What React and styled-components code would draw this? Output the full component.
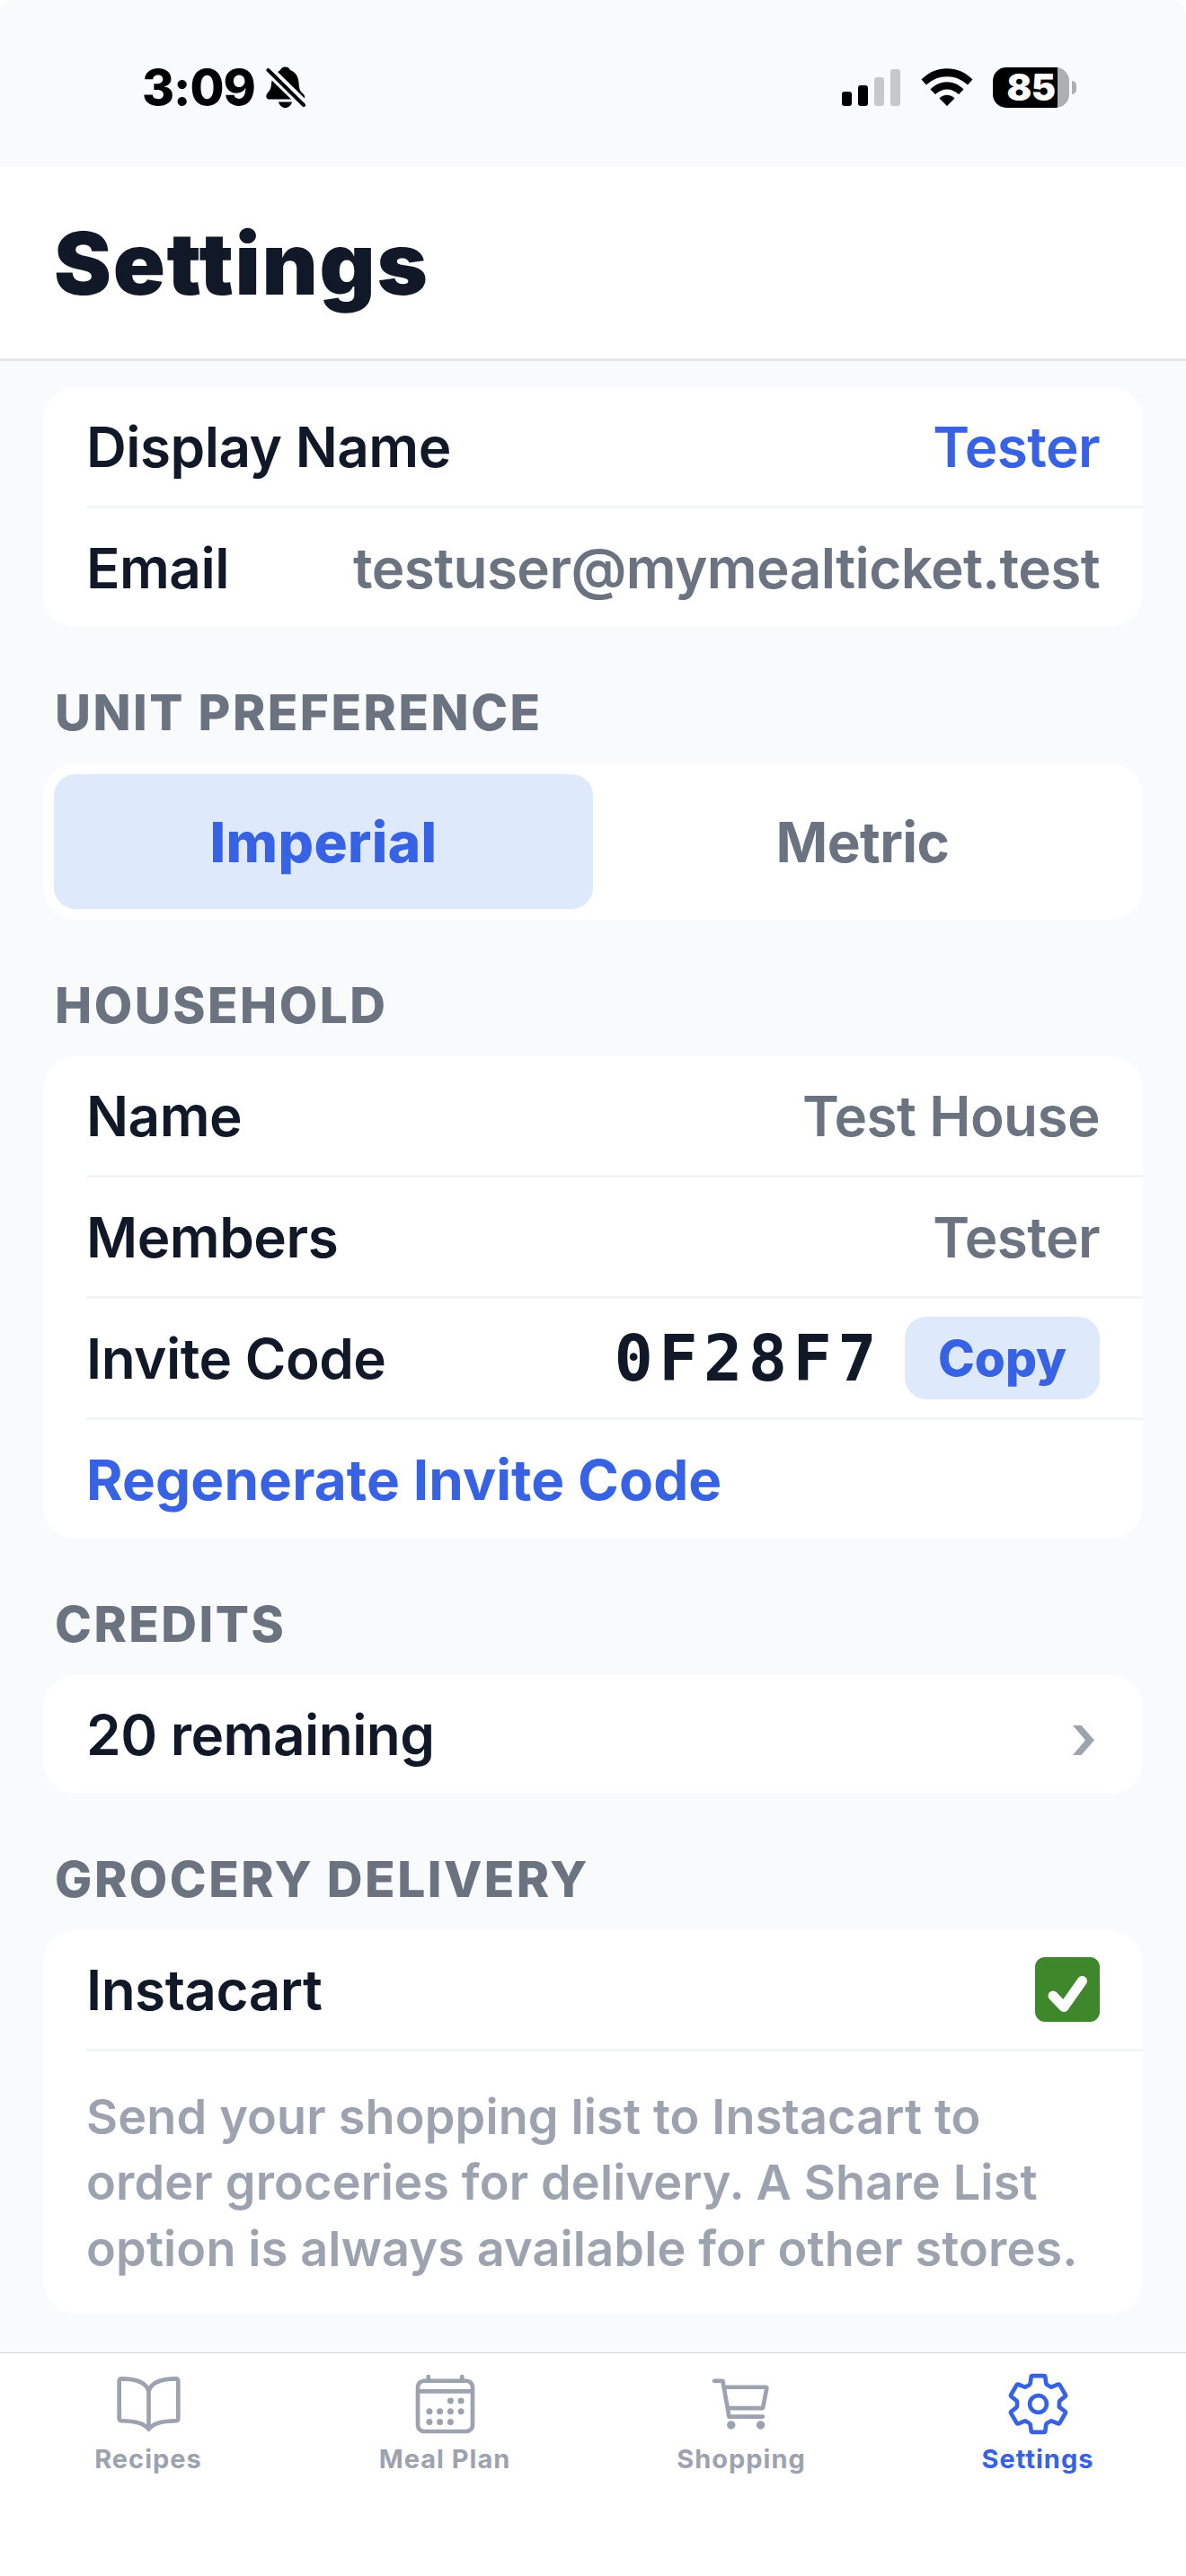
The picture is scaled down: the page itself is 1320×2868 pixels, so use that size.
import React from "react";
import styled, { createGlobalStyle } from "styled-components";
import {
  IoBookOutline,
  IoCalendarOutline,
  IoCartOutline,
  IoSettingsOutline,
} from "react-icons/io5";

const color = {
  page: "#f9fafc",
  card: "#ffffff",
  ink: "#111827",
  muted: "#6b7280",
  faint: "#9ca3af",
  line: "#f3f4f6",
  accent: "#3662e3",
  accentSoft: "#dee9fb",
};

const GlobalStyle = createGlobalStyle`
  * {
    box-sizing: border-box;
  }

  body {
    margin: 0;
    background-color: #ffffff;
    font-family: Inter, "Liberation Sans", sans-serif;
  }
`;

const Screen = styled.div`
  width: 1320px;
  height: 2868px;
  display: flex;
  flex-direction: column;
  overflow: hidden;
`;

const StatusBar = styled.div`
  height: 186px;
  flex-shrink: 0;
  display: flex;
  justify-content: space-between;
  align-items: flex-start;
  padding: 74px 122px 0 158px;
  background-color: ${color.page};
  border-radius: 16px 16px 0 0;
  color: #000000;
`;
const StatusGroup = styled.div`
  display: flex;
  align-items: center;
  height: 46px;
`;
const Clock = styled.span`
  width: 138px;
  font-size: 55px;
  font-weight: 800;
  line-height: 46px;
  letter-spacing: -1px;
`;
const BellOff = styled.svg`
  width: 44px;
  height: 46px;
`;
const Signal = styled.svg`
  width: 66px;
  height: 42px;
  margin-right: 22px;
`;
const Wifi = styled.svg`
  width: 58px;
  height: 42px;
  margin-right: 22px;
`;
const Battery = styled.div`
  width: 85px;
  height: 45px;
  display: flex;
  align-items: center;
  justify-content: center;
  border-radius: 15px;
  background: linear-gradient(to right, #000000 72px, #aeafb0 72px);
  color: #ffffff;
  font-size: 41px;
  font-weight: 900;
  letter-spacing: -0.5px;
`;
const BatteryTip = styled.div`
  width: 5px;
  height: 15px;
  margin-left: 3px;
  border-radius: 0 5px 5px 0;
  background-color: #aeafb0;
`;

const Header = styled.header`
  height: 216px;
  flex-shrink: 0;
  display: flex;
  align-items: center;
  padding: 0 60px;
  background-color: ${color.card};
  border-bottom: 3px solid #e5e7eb;
`;
const Title = styled.h1`
  margin: 0;
  font-size: 96px;
  font-weight: 900;
  letter-spacing: 1.7px;
  line-height: 112px;
  color: ${color.ink};
`;

const Content = styled.main`
  flex: 1;
  padding: 29px 48px 0;
  background-color: ${color.page};
`;
const SectionTitle = styled.h2`
  margin: 0;
  height: 152px;
  padding: 65px 13px 0;
  font-size: 55px;
  font-weight: 800;
  line-height: 60px;
  letter-spacing: 2.5px;
  text-transform: uppercase;
  color: ${color.muted};
`;
const Card = styled.section`
  border-radius: 36px;
  background-color: ${color.card};
  overflow: hidden;
`;
const Row = styled.div`
  height: 132px;
  padding: 0 48px;
  display: flex;
  justify-content: space-between;
  align-items: center;
`;
const Divider = styled.div`
  height: 3px;
  margin-left: 48px;
  background-color: ${color.line};
`;
const Label = styled.span`
  font-size: 62px;
  font-weight: 600;
  letter-spacing: -0.5px;
  white-space: nowrap;
  color: ${color.ink};
`;
const Value = styled(Label)`
  letter-spacing: -0.6px;
  color: ${(props) => (props.$link ? color.accent : color.muted)};
`;
const LinkText = styled(Label)`
  font-weight: 700;
  letter-spacing: 0.1px;
  color: ${color.accent};
`;

const Segmented = styled(Card)`
  display: flex;
  padding: 12px;
`;
const Segment = styled.button`
  flex: 1;
  height: 150px;
  border: none;
  border-radius: 24px;
  font-family: inherit;
  font-size: 62px;
  font-weight: ${(props) => (props.$active ? 800 : 700)};
  letter-spacing: ${(props) => (props.$active ? "0.4px" : "-0.6px")};
  color: ${(props) => (props.$active ? color.accent : color.muted)};
  background-color: ${(props) =>
    props.$active ? color.accentSoft : "transparent"};
`;

const CodeGroup = styled.div`
  display: flex;
  align-items: center;
  gap: 25px;
`;
const Code = styled.span`
  font-family: "DejaVu Sans Mono", monospace;
  font-size: 72px;
  font-weight: 700;
  letter-spacing: 6.4px;
  color: ${color.ink};
`;
const CopyButton = styled.button`
  width: 217px;
  height: 92px;
  padding: 0;
  border: none;
  border-radius: 24px;
  font-family: inherit;
  font-size: 55px;
  font-weight: 800;
  letter-spacing: 0;
  color: ${color.accent};
  background-color: ${color.accentSoft};
`;

const Chevron = styled.svg`
  width: 24px;
  height: 33px;
  margin: 13px 6px 0 0;
  fill: ${color.faint};
`;
const Check = styled.svg`
  width: 72px;
  height: 72px;
`;
const Note = styled.p`
  margin: 0;
  padding: 36px 48px;
  font-size: 54px;
  font-weight: 600;
  line-height: 73.3px;
  letter-spacing: 0.15px;
  color: ${color.faint};
`;

const TabBar = styled.nav`
  height: 249px;
  flex-shrink: 0;
  display: flex;
  align-items: flex-start;
  border-top: 1px solid #d1d5db;
  background-color: ${color.card};
`;
const Tab = styled.a`
  flex: 1;
  display: flex;
  flex-direction: column;
  align-items: center;
  padding-top: 19px;
  font-size: 29px;
  font-weight: 700;
  line-height: 36px;
  letter-spacing: 1px;
  color: ${(props) => (props.$active ? color.accent : color.faint)};

  svg {
    width: 75px;
    height: 75px;
    margin-bottom: 6px;
  }
`;

const household = [
  { label: "Name", value: "Test House" },
  { label: "Members", value: "Tester" },
];

const tabs = [
  { name: "Recipes", Icon: IoBookOutline },
  { name: "Meal Plan", Icon: IoCalendarOutline },
  { name: "Shopping", Icon: IoCartOutline },
  { name: "Settings", Icon: IoSettingsOutline, active: true },
];

function Status() {
  return (
    <StatusBar>
      <StatusGroup>
        <Clock>3:09</Clock>
        <BellOff viewBox="0 0 44 46">
          <path d="M13 6C15 5 16 4 17 2.500C18 1 20 0.500 21.500 0.500C24 0.500 26 1.500 27 4C33 6.500 36 11 36.500 18C37 26 38 27 41 30C43 32 43.500 33.500 43 35.500Z" />
          <path d="M6.500 15.500L28 36.500H4C1 36.500 0 34.500 0.500 32C1 29 4.500 28 5.500 23Z" />
          <path d="M14 39.500H29C28 43.500 25 46 21.500 46C18 46 15 43.500 14 39.500Z" />
          <path d="M2.500 4L42 43" stroke={color.page} strokeWidth="9" />
          <path
            d="M2.500 4L42 43"
            stroke="#000000"
            strokeWidth="4"
            strokeLinecap="round"
          />
        </BellOff>
      </StatusGroup>
      <StatusGroup>
        <Signal viewBox="0 0 66 42">
          <rect x="0" y="26" width="11" height="16" rx="3" />
          <rect x="18" y="19" width="11" height="23" rx="3" />
          <rect x="36" y="10" width="11" height="32" rx="3" fill="#c7c8c9" />
          <rect x="54" y="1" width="11" height="41" rx="3" fill="#c7c8c9" />
        </Signal>
        <Wifi viewBox="0 0 58 42">
          <path d="M0.500 12.500C16 -4 42 -4 57.500 12.500L52 18.500C39 6 19 6 6 18.500Z" />
          <path d="M10.500 23.500C21 12.500 37 12.500 47.500 23.500L42 29C34.500 21.500 23.500 21.500 16 29Z" />
          <path d="M20.500 33.500C25.500 28.500 32.500 28.500 37.500 33.500L29 42Z" />
        </Wifi>
        <Battery>85</Battery>
        <BatteryTip />
      </StatusGroup>
    </StatusBar>
  );
}

function App() {
  return (
    <>
      <GlobalStyle />
      <Screen>
        <Status />
        <Header>
          <Title>Settings</Title>
        </Header>

        <Content>
          <Card>
            <Row>
              <Label>Display Name</Label>
              <Value $link>Tester</Value>
            </Row>
            <Divider />
            <Row>
              <Label>Email</Label>
              <Value>testuser@mymealticket.test</Value>
            </Row>
          </Card>

          <SectionTitle>Unit Preference</SectionTitle>
          <Segmented>
            <Segment $active>Imperial</Segment>
            <Segment>Metric</Segment>
          </Segmented>

          <SectionTitle>Household</SectionTitle>
          <Card>
            {household.map((item) => (
              <React.Fragment key={item.label}>
                <Row>
                  <Label>{item.label}</Label>
                  <Value>{item.value}</Value>
                </Row>
                <Divider />
              </React.Fragment>
            ))}
            <Row>
              <Label>Invite Code</Label>
              <CodeGroup>
                <Code>0F28F7</Code>
                <CopyButton>Copy</CopyButton>
              </CodeGroup>
            </Row>
            <Divider />
            <Row>
              <LinkText>Regenerate Invite Code</LinkText>
            </Row>
          </Card>

          <SectionTitle>Credits</SectionTitle>
          <Card>
            <Row>
              <Label>20 remaining</Label>
              <Chevron viewBox="0 0 24 33">
                <path d="M0 0H9.500L24 16.500L9.500 33H0L14 16.500Z" />
              </Chevron>
            </Row>
          </Card>

          <SectionTitle>Grocery Delivery</SectionTitle>
          <Card>
            <Row>
              <Label>Instacart</Label>
              <Check viewBox="0 0 72 72">
                <rect width="72" height="72" rx="11" fill="#3e882b" />
                <path
                  d="M20 43L32 55.500L52.500 26.500"
                  fill="none"
                  stroke="#ffffff"
                  strokeWidth="11"
                  strokeLinecap="round"
                  strokeLinejoin="round"
                />
              </Check>
            </Row>
            <Divider />
            <Note>
              Send your shopping list to Instacart to
              <br />
              order groceries for delivery. A Share List
              <br />
              option is always available for other stores.
            </Note>
          </Card>
        </Content>

        <TabBar>
          {tabs.map(({ name, Icon, active }) => (
            <Tab key={name} $active={active}>
              <Icon />
              {name}
            </Tab>
          ))}
        </TabBar>
      </Screen>
    </>
  );
}

export default App;
